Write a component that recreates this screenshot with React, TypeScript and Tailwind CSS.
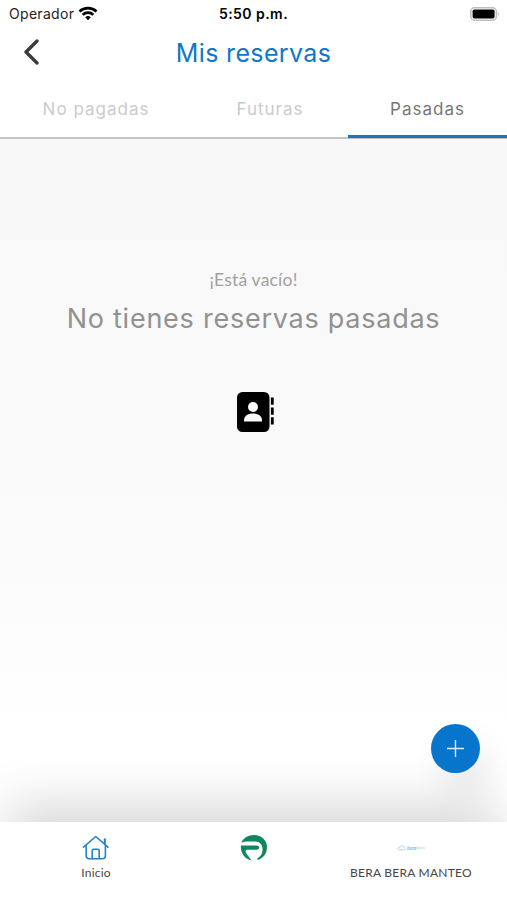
import React from "react";

function WifiIcon() {
  return (
    <svg width="20" height="15" viewBox="0 0 20 15" fill="none" stroke="#000" strokeWidth="2.7">
      <path d="M1.5 5.4a12.4 12.4 0 0 1 17 0" />
      <path d="M4.7 8.8a7.8 7.8 0 0 1 10.6 0" />
      <path d="M7.2 11.2a4.2 4.2 0 0 1 5.6 0L10 14.2z" fill="#000" stroke="none" />
    </svg>
  );
}

function BatteryIcon() {
  return (
    <svg width="30" height="14" viewBox="0 0 30 14">
      <rect x="0.8" y="0.8" width="25.6" height="12.4" rx="3.8" fill="#fff" stroke="#bdbdbd" strokeWidth="1.5" />
      <rect x="2.6" y="2.5" width="22" height="9" rx="1.8" fill="#000" />
      <path d="M28 4.8q2 2.2 0 4.4z" fill="#bdbdbd" />
    </svg>
  );
}

function ContactsIcon() {
  return (
    <svg width="38" height="40" viewBox="0 0 38 40">
      <rect width="32.5" height="40" rx="5.5" fill="#000" />
      <circle cx="16" cy="15" r="5" fill="#fafafa" />
      <path d="M7 29.5v-1.2c0-4.2 3.8-6.8 9-6.8s9 2.6 9 6.8v1.2z" fill="#fafafa" />
      <path d="M35.3 5.5v7.3M35.3 15.5v7.3M35.3 25.2v7.3" stroke="#000" strokeWidth="2.8" />
    </svg>
  );
}

function HomeIcon() {
  return (
    <svg width="28" height="25" viewBox="0 0 28 25" fill="none" stroke="#2582cb" strokeWidth="1.6" strokeLinecap="round" strokeLinejoin="round">
      <path d="M1.5 12.2 13.7 1.5 26 12.2" />
      <path d="M4.2 10.5v10.2q0 3 3 3h13.2q3 0 3-3V10.5" />
      <path d="M10.2 23.5v-8q0-1.3 1.3-1.3h4.4q1.3 0 1.3 1.3v8" />
      <path d="M22.8 4.2v4.6" strokeWidth="2" />
    </svg>
  );
}

function BrandIcon() {
  return (
    <svg width="28" height="28" viewBox="0 0 28 28" fill="#13875c">
      <path d="M1.4 8.8C3.4 4 8 1 14 1c7.4 0 13 5 13 12.2 0 6.6-4 11.2-9.4 12.8l-.5-1.6c3.8-1.8 5.5-5 5.5-8.8 0-5.2-3-8.2-7.6-8.2H8Q4 7.4 1.4 8.8z" />
      <path d="M.9 11.5h15.6c3.6 0 3.6 4.2 0 4.2H7.6c-2.6 0-2.6 2 -.9 4.4l4.9 6.5C4.8 24.8.4 19.3.9 11.5z" />
    </svg>
  );
}

function CourtLogo() {
  return (
    <svg width="29" height="10" viewBox="0 0 29 10" fill="none">
      <path d="M2.8 6.9C-.3 6.2 1.3 4 3 4.2 4 1.7 6.5 2.5 6.8 4.3c2.2.1 2 2.5.2 2.6z" stroke="#9ed3ed" strokeWidth=".9" />
      <text x="10" y="6.6" className="font-['Lato'] text-[5px] font-bold italic" fill="#76bedf">bera</text>
      <text x="20" y="6.4" className="font-['Lato'] text-[4px]" fill="#bbc5ca">bera</text>
    </svg>
  );
}

export default function App() {
  return (
    <div className="relative flex h-[900px] w-[507px] flex-col overflow-hidden bg-white font-['Lato',sans-serif]">
      <header className="flex h-[76px] shrink-0 flex-col">
        <div className="grid h-[27px] shrink-0 grid-cols-3 items-center pl-[9px] pr-[7px] font-['Inter',sans-serif] text-[14px] text-[#222]">
          <div className="flex items-center gap-[4px]">
            <span className="tracking-[0.3px]">Operador</span>
            <WifiIcon />
          </div>
          <span className="-ml-[2px] text-center font-semibold tracking-[0.45px] text-black">5:50 p.m.</span>
          <div className="flex justify-end"><BatteryIcon /></div>
        </div>
        <div className="grid h-[49px] shrink-0 grid-cols-[60px_1fr_60px] items-center pt-px">
          <button aria-label="Volver" className="flex pl-[23px]">
            <svg width="17" height="26" viewBox="0 0 17 26" fill="none" stroke="#3c3c3c" strokeWidth="3.4" strokeLinecap="round" strokeLinejoin="round">
              <path d="M14 2 3 13l11 11" />
            </svg>
          </button>
          <h1 className="whitespace-nowrap pt-px text-center font-['Inter',sans-serif] text-[25px] leading-8 tracking-[0.35px] text-[#0f78c8]">Mis reservas</h1>
        </div>
      </header>

      <nav className="grid h-[63px] shrink-0 grid-cols-[192px_156px_159px] border-b-2 border-[#c4c4c4] text-center font-['Inter',sans-serif] text-[17px] leading-[66px] tracking-[1px] text-[#cbcbcb]">
        <span className="h-[61px]">No pagadas</span>
        <span className="h-[61px]">Futuras</span>
        <span className="h-[62px] border-b-[3px] border-[#1c76bd] text-[#777]">Pasadas</span>
      </nav>

      <main className="relative flex min-h-0 flex-1 flex-col items-center overflow-hidden bg-[linear-gradient(#f8f8f8_0%,#f9f9f9_45%,#fcfcfc_66%,#fff_88%)] pt-[129px]">
        <p className="text-[17.5px] leading-6 tracking-[0.2px] text-[#a0a0a0]">¡Está vacío!</p>
        <h2 className="mt-[7px] whitespace-nowrap font-['Inter',sans-serif] text-[27px] leading-10 tracking-[0.75px] text-[#919191]">No tienes reservas pasadas</h2>
        <div className="ml-[5px] mt-[53px]"><ContactsIcon /></div>
        <div className="absolute -bottom-10 left-5 right-5 h-10 shadow-[0_-4px_52px_12px_rgba(0,0,0,0.17)]" />
        <button aria-label="Nueva reserva" className="absolute bottom-[49px] right-[27px] flex size-[49px] items-center justify-center rounded-full bg-[#0875cd] shadow-[10px_20px_34px_rgba(0,0,0,0.08)]">
          <svg width="17" height="17" viewBox="0 0 17 17" stroke="#d8efff" strokeWidth="1.4"><path d="M8.5 0v17M0 8.5h17" /></svg>
        </button>
      </main>

      <footer className="grid h-[78px] shrink-0 grid-cols-[192px_123px_192px] bg-white text-[12px] leading-4 text-[#454545]">
        <div className="flex flex-col items-center pt-[13px]">
          <HomeIcon />
          <span className="mt-[5px] tracking-[0.2px]">Inicio</span>
        </div>
        <div className="flex justify-center pt-[12px]"><BrandIcon /></div>
        <div className="flex flex-col items-center pt-[21px]">
          <CourtLogo />
          <span className="mt-[12px] whitespace-nowrap tracking-[0.25px]">BERA BERA MANTEO</span>
        </div>
      </footer>
    </div>
  );
}
